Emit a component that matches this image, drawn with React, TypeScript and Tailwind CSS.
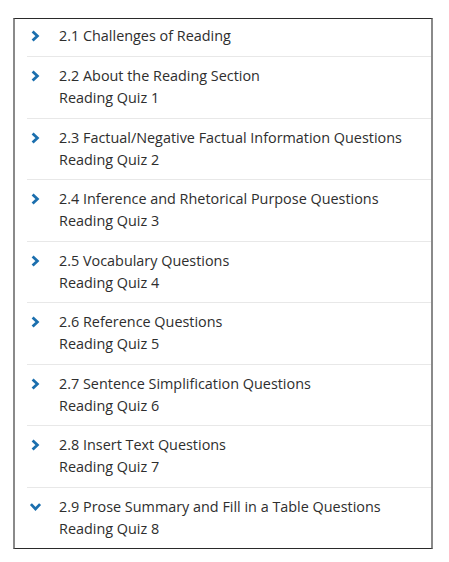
const items = [
  { title: "2.1 Challenges of Reading" },
  { title: "2.2 About the Reading Section", sub: "Reading Quiz 1" },
  { title: "2.3 Factual/Negative Factual Information Questions", sub: "Reading Quiz 2" },
  { title: "2.4 Inference and Rhetorical Purpose Questions", sub: "Reading Quiz 3" },
  { title: "2.5 Vocabulary Questions", sub: "Reading Quiz 4" },
  { title: "2.6 Reference Questions", sub: "Reading Quiz 5" },
  { title: "2.7 Sentence Simplification Questions", sub: "Reading Quiz 6" },
  { title: "2.8 Insert Text Questions", sub: "Reading Quiz 7" },
  { title: "2.9 Prose Summary and Fill in a Table Questions", sub: "Reading Quiz 8", open: true },
];

const Chevron = ({ open }: { open?: boolean }) => (
  <svg width="11" height="12" viewBox="0 0 11 12" className={open ? "rotate-90" : ""}>
    <path d="M2.6 1.4 L7.4 6 L2.6 10.6" fill="none" stroke="#1b6fae" strokeWidth="2.8" />
  </svg>
);

export default function App() {
  return (
    <div className="min-h-screen bg-white pt-[18px] pl-[13px]" style={{ fontFamily: '"Open Sans", sans-serif' }}>
      <div className="w-[420px] h-[531px] border-y border-y-[#2a2a2a] border-x-2 border-x-[#8a8a8a] bg-white">
        <ul>
          {items.map((item, i) => (
            <li
              key={item.title}
              className={`ml-[12px] flex text-[14.4px] leading-[22px] text-[#2e2e2e] ${i > 0 ? "border-t border-[#e8e8e8] pt-[8px] pb-[8.5px]" : "pt-[6px] pb-[9px]"}`}
            >
              <div className="w-[32px] pl-[3px] pt-[5px]">
                <Chevron open={item.open} />
              </div>
              <div>
                <div>{item.title}</div>
                {item.sub && <div>{item.sub}</div>}
              </div>
            </li>
          ))}
        </ul>
      </div>
    </div>
  );
}
